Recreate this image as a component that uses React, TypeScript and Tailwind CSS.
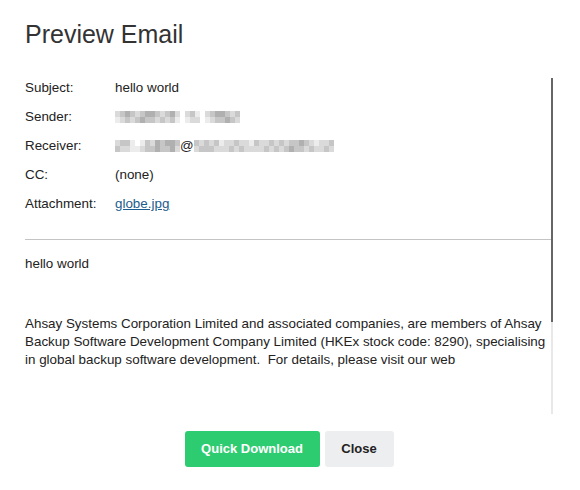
import React from 'react';

// Pixelated stand-ins for the redacted sender / receiver text.
const SHADES = [
  'bg-white',
  'bg-[#ececec]',
  'bg-[#dadada]',
  'bg-[#c6c6c6]',
  'bg-[#b0b0b0]',
];

function Mosaic({ rows }: { rows: string[] }) {
  return (
    <span className="inline-flex flex-col align-middle">
      {rows.map((row, r) => (
        <span key={r} className="flex">
          {row.split('').map((c, i) => (
            <span key={i} className={`block w-[5px] h-[6px] ${SHADES[Number(c)]}`} />
          ))}
        </span>
      ))}
    </span>
  );
}

const SENDER = [
  '2343234432342023102344323',
  '1232343323231012201233432',
];
const RECEIVER_USER = ['2331013243443', '3221123343342'];
const RECEIVER_DOMAIN = [
  '3232312232213223232334321223',
  '2333222323222232323433232232',
];

const FIELDS: { label: string; value: React.ReactNode }[] = [
  { label: 'Subject:', value: 'hello world' },
  { label: 'Sender:', value: <Mosaic rows={SENDER} /> },
  {
    label: 'Receiver:',
    value: (
      <span className="inline-flex items-center">
        <Mosaic rows={RECEIVER_USER} />
        <span>@</span>
        <Mosaic rows={RECEIVER_DOMAIN} />
      </span>
    ),
  },
  { label: 'CC:', value: '(none)' },
  {
    label: 'Attachment:',
    value: (
      <a href="#" className="text-[#1d5c8c] underline">
        globe.jpg
      </a>
    ),
  },
];

export default function App() {
  return (
    <div className="w-[580px] h-[490px] bg-white font-['Liberation_Sans',Arial,sans-serif] text-[#222]">
      <div className="pl-[25px] pr-[27px] pt-[19px]">
        <h1 className="text-[25px] leading-[30px] text-[#333]">Preview Email</h1>

        <div className="mt-[29px] flex h-[336px]">
          <div className="flex-1 overflow-hidden text-[13.4px]">
            <div className="flex flex-col gap-[9px]">
              {FIELDS.map((f) => (
                <div key={f.label} className="flex h-[20px] items-center leading-[20px]">
                  <span className="w-[90px] shrink-0">{f.label}</span>
                  <span className="flex items-center">{f.value}</span>
                </div>
              ))}
            </div>

            <div className="mt-[25px] border-t border-[#c4c4c4]" />

            <p className="mt-[14px] leading-[20px]">hello world</p>

            <p className="mt-[41px] leading-[18px]">
              Ahsay Systems Corporation Limited and associated companies, are members of Ahsay
              Backup Software Development Company Limited (HKEx stock code: 8290), specialising
              in global backup software development.&nbsp; For details, please visit our web
            </p>
          </div>

          <div className="flex w-[2px] flex-col">
            <div className="h-[244px] bg-[#666666]" />
            <div className="flex-1 bg-[#e8e8e8]" />
          </div>
        </div>

        <div className="mt-[17px] flex justify-center gap-[5px]">
          <button className="h-[36px] w-[135px] rounded-[3px] bg-[#2ecc71] text-[13px] font-bold text-white">
            Quick Download
          </button>
          <button className="h-[36px] w-[69px] rounded-[3px] bg-[#eceef0] text-[13px] font-bold text-[#222]">
            Close
          </button>
        </div>
      </div>
    </div>
  );
}
